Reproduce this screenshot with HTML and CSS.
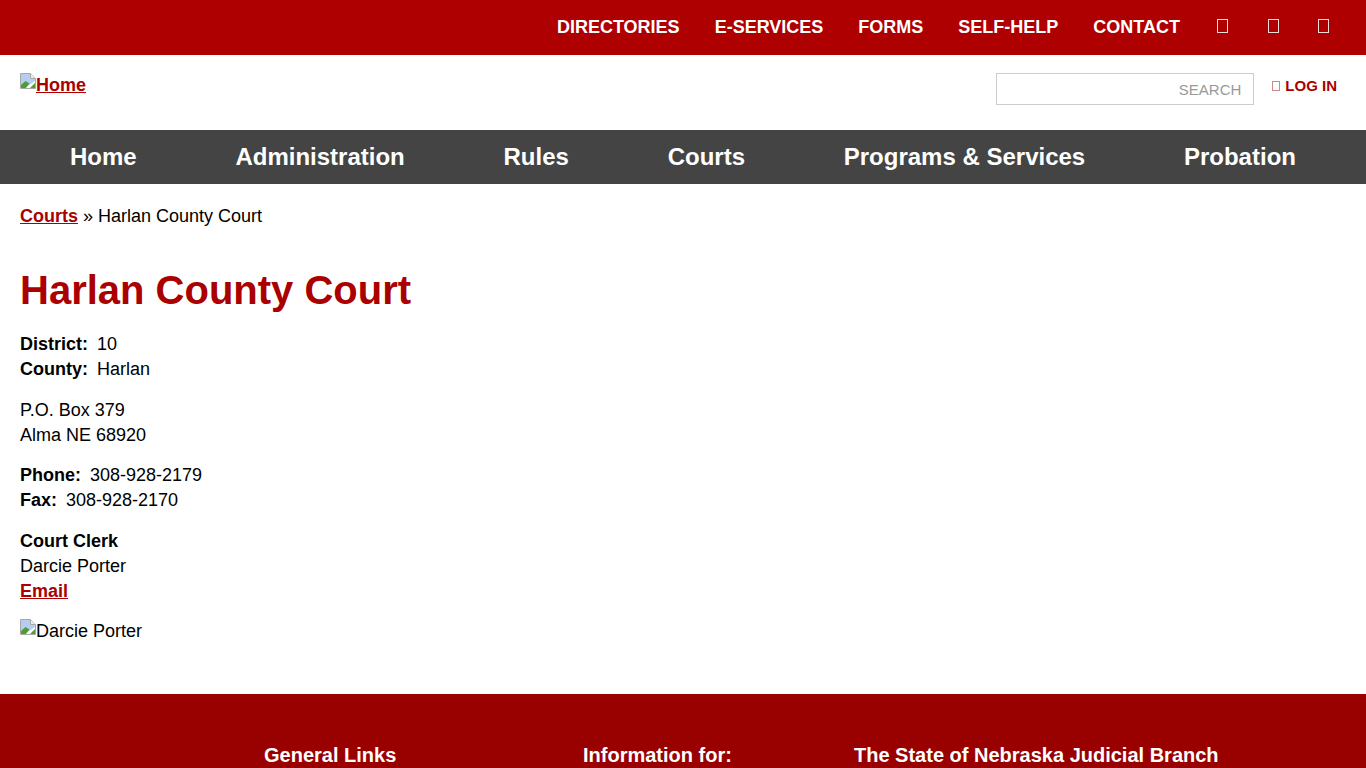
FILE: index.html
```html
<!DOCTYPE html>
<html lang="en">
<head>
<meta charset="utf-8">
<title>Harlan County Court</title>
<link rel="stylesheet" href="styles.css">
</head>
<body>
<header class="topbar">
  <nav class="toplinks">
    <a href="#">Directories</a>
    <a href="#">E-Services</a>
    <a href="#">Forms</a>
    <a href="#">Self-Help</a>
    <a href="#">Contact</a>
  </nav>
  <div class="socials">
    <a href="#" class="tofu-link"><span class="tofu"></span></a>
    <a href="#" class="tofu-link"><span class="tofu"></span></a>
    <a href="#" class="tofu-link"><span class="tofu"></span></a>
  </div>
</header>
<div class="brandbar">
  <a href="#" class="logo">
    <svg class="broken" viewBox="0 0 16 16" width="16" height="16" aria-hidden="true"><path d="M.5.5h10l5 5v10H.5z" fill="#fff" stroke="#a8a8a8"/><path d="M1 1h9.500v5H15v2l-6 4-8 3z" fill="#b4cdf0"/><path d="M1 15v-3l4.500-4 4 2.500L6 15z" fill="#4f9e35"/><path d="M10 15l5-5v5z" fill="#4f9e35"/><path d="M10.500.5v5h5" fill="#eee" stroke="#a8a8a8"/></svg>Home</a>
  <div class="tools">
    <div class="search"><span class="search-label">SEARCH</span></div>
    <a href="#" class="login"><span class="tofu tofu-small"></span>LOG IN</a>
  </div>
</div>
<nav class="mainnav">
  <a href="#">Home</a>
  <a href="#">Administration</a>
  <a href="#">Rules</a>
  <a href="#">Courts</a>
  <a href="#">Programs &amp; Services</a>
  <a href="#">Probation</a>
</nav>
<main class="content">
  <p class="crumbs"><a href="#">Courts</a> » Harlan County Court</p>
  <h1>Harlan County Court</h1>
  <div class="group">
    <div><b class="label">District:</b>10</div>
    <div><b class="label">County:</b>Harlan</div>
  </div>
  <div class="group">
    <div>P.O. Box 379</div>
    <div>Alma NE 68920</div>
  </div>
  <div class="group">
    <div><b class="label">Phone:</b>308-928-2179</div>
    <div><b class="label">Fax:</b>308-928-2170</div>
  </div>
  <div class="group">
    <div><b>Court Clerk</b></div>
    <div>Darcie Porter</div>
    <div><a href="#">Email</a></div>
  </div>
  <div class="photo">
    <svg class="broken" viewBox="0 0 16 16" width="16" height="16" aria-hidden="true"><path d="M.5.5h10l5 5v10H.5z" fill="#fff" stroke="#a8a8a8"/><path d="M1 1h9.500v5H15v2l-6 4-8 3z" fill="#b4cdf0"/><path d="M1 15v-3l4.500-4 4 2.500L6 15z" fill="#4f9e35"/><path d="M10 15l5-5v5z" fill="#4f9e35"/><path d="M10.500.5v5h5" fill="#eee" stroke="#a8a8a8"/></svg>Darcie Porter</div>
</main>
<footer class="footer">
  <div class="col col-a">General Links</div>
  <div class="col col-b">Information for:</div>
  <div class="col col-c">The State of Nebraska Judicial Branch</div>
</footer>
</body>
</html>
```
FILE: styles.css
```css
html, body { margin: 0; padding: 0; }
body {
  font-family: "Liberation Sans", Arial, sans-serif;
  font-size: 18px;
  line-height: 25.2px;
  color: #000;
  background: #fff;
  height: 768px;
  overflow: hidden;
}
a { color: #a00; font-weight: bold; }

.topbar {
  height: 55px;
  background: #ae0000;
  display: flex;
  justify-content: flex-end;
  align-items: center;
  padding-right: 37px;
  box-sizing: border-box;
}
.toplinks { display: flex; gap: 35px; }
.toplinks a {
  color: #fff;
  text-decoration: none;
  text-transform: uppercase;
  font-size: 18px;
}
.socials { display: flex; margin: 0 0 3px 37px; gap: 39.5px; }
.tofu-link { display: flex; width: 11px; }
.tofu {
  display: inline-block;
  width: 11px;
  height: 14px;
  border: 1px solid #f5dcdc;
  box-sizing: border-box;
}
.tofu-small {
  width: 8px;
  height: 10px;
  border-color: #c98a8a;
  margin-right: 5px;
}

.brandbar {
  height: 75px;
  display: flex;
  justify-content: space-between;
  align-items: flex-start;
  padding: 0 29px 0 20px;
}
.logo { margin-top: 18px; display: block; }
.broken { vertical-align: top; }
.tools { display: flex; align-items: center; margin-top: 18px; }
.search {
  width: 258px;
  height: 32px;
  box-sizing: border-box;
  border: 1px solid #ccc;
  text-align: right;
  padding-right: 12px;
  line-height: 31px;
  font-size: 15px;
  color: #999;
}
.login {
  margin-left: 18px;
  font-size: 15px;
  text-decoration: none;
  display: flex;
  align-items: center;
  line-height: 26px;
  margin-top: -7px;
}

.mainnav {
  height: 54px;
  background: #444;
  display: flex;
  justify-content: space-between;
  align-items: center;
  padding: 0 70px;
}
.mainnav a {
  color: #fff;
  text-decoration: none;
  font-size: 24px;
}

.content { height: 510px; padding: 0 20px; box-sizing: border-box; overflow: hidden; }
.crumbs { margin: 20px 0 0; }
h1 {
  margin: 33px 0 0;
  font-size: 40px;
  line-height: 56px;
  color: #a00;
}
.group { margin-top: 15.2px; }
h1 + .group { margin-top: 13.8px; }
.label { margin-right: 9px; }
.photo { margin-top: 14.2px; }

.footer {
  height: 74px;
  background: #990000;
  color: #fff;
  font-weight: bold;
  font-size: 20px;
  overflow: hidden;
  display: flex;
  padding-top: 48px;
  box-sizing: border-box;
  line-height: 26px;
}
.col-a { margin-left: 264px; width: 319px; }
.col-b { width: 271px; }
```
